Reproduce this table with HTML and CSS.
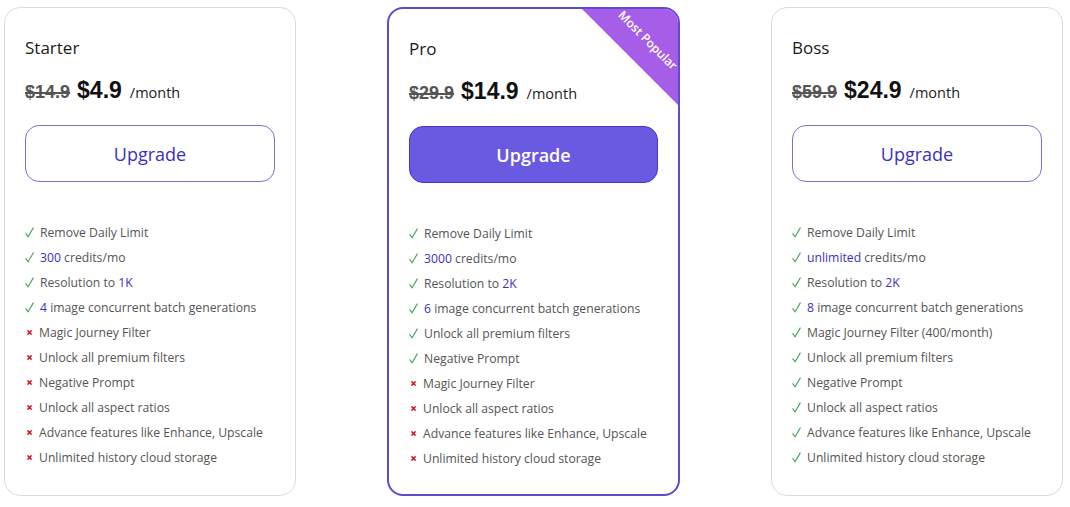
FILE: index.html
```html
<!DOCTYPE html>
<html>
<head>
<meta charset="utf-8">
<link rel="stylesheet" href="styles.css">
</head>
<body>
<div class="plans">
  <div class="card">
    <div class="name">Starter</div>
    <div class="price"><span class="old">$14.9</span><span class="now">$4.9</span><span class="per">/month</span></div>
    <button class="btn">Upgrade</button>
    <ul class="features">
      <li class="yes"><svg class="ic" viewBox="0 0 10 12"><polyline points="0.6,7 3.4,10.8 9.4,0.6"/></svg><span>Remove Daily Limit</span></li>
      <li class="yes"><svg class="ic" viewBox="0 0 10 12"><polyline points="0.6,7 3.4,10.8 9.4,0.6"/></svg><span><b>300</b> credits/mo</span></li>
      <li class="yes"><svg class="ic" viewBox="0 0 10 12"><polyline points="0.6,7 3.4,10.8 9.4,0.6"/></svg><span>Resolution to <b>1K</b></span></li>
      <li class="yes"><svg class="ic" viewBox="0 0 10 12"><polyline points="0.6,7 3.4,10.8 9.4,0.6"/></svg><span><b>4</b> image concurrent batch generations</span></li>
      <li class="no"><svg class="ix" viewBox="0 0 6 6"><path d="M0.5 0.5L5.5 5.5M5.5 0.5L0.5 5.5"/></svg><span>Magic Journey Filter</span></li>
      <li class="no"><svg class="ix" viewBox="0 0 6 6"><path d="M0.5 0.5L5.5 5.5M5.5 0.5L0.5 5.5"/></svg><span>Unlock all premium filters</span></li>
      <li class="no"><svg class="ix" viewBox="0 0 6 6"><path d="M0.5 0.5L5.5 5.5M5.5 0.5L0.5 5.5"/></svg><span>Negative Prompt</span></li>
      <li class="no"><svg class="ix" viewBox="0 0 6 6"><path d="M0.5 0.5L5.5 5.5M5.5 0.5L0.5 5.5"/></svg><span>Unlock all aspect ratios</span></li>
      <li class="no"><svg class="ix" viewBox="0 0 6 6"><path d="M0.5 0.5L5.5 5.5M5.5 0.5L0.5 5.5"/></svg><span>Advance features like Enhance, Upscale</span></li>
      <li class="no"><svg class="ix" viewBox="0 0 6 6"><path d="M0.5 0.5L5.5 5.5M5.5 0.5L0.5 5.5"/></svg><span>Unlimited history cloud storage</span></li>
    </ul>
  </div>

  <div class="card pro">
    <div class="ribbon"><span>Most Popular</span></div>
    <div class="name">Pro</div>
    <div class="price"><span class="old">$29.9</span><span class="now">$14.9</span><span class="per">/month</span></div>
    <button class="btn solid">Upgrade</button>
    <ul class="features">
      <li class="yes"><svg class="ic" viewBox="0 0 10 12"><polyline points="0.6,7 3.4,10.8 9.4,0.6"/></svg><span>Remove Daily Limit</span></li>
      <li class="yes"><svg class="ic" viewBox="0 0 10 12"><polyline points="0.6,7 3.4,10.8 9.4,0.6"/></svg><span><b>3000</b> credits/mo</span></li>
      <li class="yes"><svg class="ic" viewBox="0 0 10 12"><polyline points="0.6,7 3.4,10.8 9.4,0.6"/></svg><span>Resolution to <b>2K</b></span></li>
      <li class="yes"><svg class="ic" viewBox="0 0 10 12"><polyline points="0.6,7 3.4,10.8 9.4,0.6"/></svg><span><b>6</b> image concurrent batch generations</span></li>
      <li class="yes"><svg class="ic" viewBox="0 0 10 12"><polyline points="0.6,7 3.4,10.8 9.4,0.6"/></svg><span>Unlock all premium filters</span></li>
      <li class="yes"><svg class="ic" viewBox="0 0 10 12"><polyline points="0.6,7 3.4,10.8 9.4,0.6"/></svg><span>Negative Prompt</span></li>
      <li class="no"><svg class="ix" viewBox="0 0 6 6"><path d="M0.5 0.5L5.5 5.5M5.5 0.5L0.5 5.5"/></svg><span>Magic Journey Filter</span></li>
      <li class="no"><svg class="ix" viewBox="0 0 6 6"><path d="M0.5 0.5L5.5 5.5M5.5 0.5L0.5 5.5"/></svg><span>Unlock all aspect ratios</span></li>
      <li class="no"><svg class="ix" viewBox="0 0 6 6"><path d="M0.5 0.5L5.5 5.5M5.5 0.5L0.5 5.5"/></svg><span>Advance features like Enhance, Upscale</span></li>
      <li class="no"><svg class="ix" viewBox="0 0 6 6"><path d="M0.5 0.5L5.5 5.5M5.5 0.5L0.5 5.5"/></svg><span>Unlimited history cloud storage</span></li>
    </ul>
  </div>

  <div class="card">
    <div class="name">Boss</div>
    <div class="price"><span class="old">$59.9</span><span class="now">$24.9</span><span class="per">/month</span></div>
    <button class="btn">Upgrade</button>
    <ul class="features">
      <li class="yes"><svg class="ic" viewBox="0 0 10 12"><polyline points="0.6,7 3.4,10.8 9.4,0.6"/></svg><span>Remove Daily Limit</span></li>
      <li class="yes"><svg class="ic" viewBox="0 0 10 12"><polyline points="0.6,7 3.4,10.8 9.4,0.6"/></svg><span><b>unlimited</b> credits/mo</span></li>
      <li class="yes"><svg class="ic" viewBox="0 0 10 12"><polyline points="0.6,7 3.4,10.8 9.4,0.6"/></svg><span>Resolution to <b>2K</b></span></li>
      <li class="yes"><svg class="ic" viewBox="0 0 10 12"><polyline points="0.6,7 3.4,10.8 9.4,0.6"/></svg><span><b>8</b> image concurrent batch generations</span></li>
      <li class="yes"><svg class="ic" viewBox="0 0 10 12"><polyline points="0.6,7 3.4,10.8 9.4,0.6"/></svg><span>Magic Journey Filter (400/month)</span></li>
      <li class="yes"><svg class="ic" viewBox="0 0 10 12"><polyline points="0.6,7 3.4,10.8 9.4,0.6"/></svg><span>Unlock all premium filters</span></li>
      <li class="yes"><svg class="ic" viewBox="0 0 10 12"><polyline points="0.6,7 3.4,10.8 9.4,0.6"/></svg><span>Negative Prompt</span></li>
      <li class="yes"><svg class="ic" viewBox="0 0 10 12"><polyline points="0.6,7 3.4,10.8 9.4,0.6"/></svg><span>Unlock all aspect ratios</span></li>
      <li class="yes"><svg class="ic" viewBox="0 0 10 12"><polyline points="0.6,7 3.4,10.8 9.4,0.6"/></svg><span>Advance features like Enhance, Upscale</span></li>
      <li class="yes"><svg class="ic" viewBox="0 0 10 12"><polyline points="0.6,7 3.4,10.8 9.4,0.6"/></svg><span>Unlimited history cloud storage</span></li>
    </ul>
  </div>
</div>
</body>
</html>
```

FILE: styles.css
```css
* { box-sizing: border-box; }
html, body { margin: 0; background: #fff; }
body {
  font-family: "Open Sans", "Noto Sans", sans-serif;
  color: #222;
}
.plans {
  display: flex;
  gap: 91px;
  padding: 7px 4px 0 4px;
}
.card {
  position: relative;
  width: 292px;
  height: 489px;
  border: 1px solid #dcdcdc;
  border-radius: 16px;
  padding: 28px 20px 0 20px;
  overflow: hidden;
  background: #fff;
}
.card.pro {
  width: 293px;
  border: 2px solid #5a4dcf;
}
.name {
  font-size: 17px;
  line-height: 24px;
  color: #1a1a1a;
}
.price {
  display: flex;
  align-items: baseline;
  margin-top: 17px;
  height: 30px;
}
.old {
  font-family: "Liberation Sans", Arial, sans-serif;
  font-weight: 700;
  font-size: 18px;
  color: #555;
  text-decoration: line-through;
  text-decoration-thickness: 2px;
}
.now {
  font-family: "Liberation Sans", Arial, sans-serif;
  font-weight: 700;
  font-size: 23px;
  color: #111;
  margin-left: 7px;
}
.per {
  font-size: 14.5px;
  color: #222;
  margin-left: 8px;
}
.btn {
  display: block;
  width: 100%;
  height: 57px;
  margin-top: 18px;
  border: 1px solid #7a70cf;
  border-radius: 14px;
  background: #fff;
  color: #3b30c4;
  font-family: "Open Sans", "Noto Sans", sans-serif;
  font-size: 18px;
  cursor: pointer;
}
.btn.solid {
  background: #6a5ae2;
  border: 1.5px solid #4537c0;
  color: #fff;
  font-weight: 600;
}
.features {
  list-style: none;
  margin: 38px 0 0 0;
  padding: 0;
}
.features li {
  display: flex;
  align-items: center;
  height: 25px;
  font-size: 12.2px;
  color: #555;
}
.features b {
  font-weight: 400;
  color: #3b30c4;
}
.ic {
  width: 9px;
  height: 11px;
  margin: 0 6px 0 0;
  fill: none;
  stroke: #3ea25c;
  stroke-width: 1.2;
  flex: none;
}
.ix {
  width: 5px;
  height: 5px;
  margin: 0 7px 0 2px;
  fill: none;
  stroke: #d0101a;
  stroke-width: 1.8;
  flex: none;
}
.ribbon {
  position: absolute;
  top: 0;
  right: 0;
  width: 96px;
  height: 96px;
  background: #a65ee8;
  clip-path: polygon(0 0, 100% 0, 100% 100%);
}
.ribbon span {
  position: absolute;
  left: 66px;
  top: 31px;
  transform: translate(-50%, -50%) rotate(45deg);
  color: #fff;
  font-size: 12px;
  font-weight: 600;
  white-space: nowrap;
}
```
